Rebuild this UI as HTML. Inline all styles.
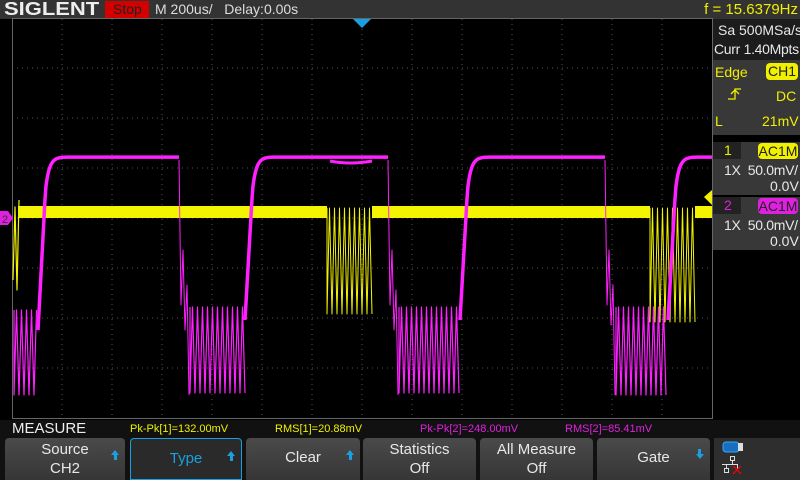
<!DOCTYPE html>
<html><head><meta charset="utf-8"><style>
*{margin:0;padding:0;box-sizing:border-box}
body{width:800px;height:480px;background:#000;position:relative;overflow:hidden;font-family:"Liberation Sans",sans-serif;color:#fff}
.abs{position:absolute;white-space:nowrap}
.top{left:0;top:0;width:800px;height:19px;background:#333}
.btn{position:absolute;top:438px;height:42px;background:linear-gradient(#4a4a4a,#363636);border-radius:4px 4px 0 0;color:#e8e8e8;font-size:15px;text-align:center;line-height:19px}
.arr{position:absolute;right:6px;top:12px;width:0;height:0;border-left:4px solid transparent;border-right:4px solid transparent;border-bottom:5px solid #1aa0e0}
.arr:after{content:"";position:absolute;left:-1.5px;top:5px;width:3px;height:5px;background:#1aa0e0}
.rp{color:#e8e8e8;font-size:14px;line-height:17px}
.y{color:#f0f000}
</style></head><body>
<div class="abs top"></div>
<div class="abs" style="left:4px;top:0;font-size:18px;font-weight:bold;color:#eee;line-height:19px;transform:scaleX(1.22);transform-origin:left">SIGLENT</div>
<div class="abs" style="left:105px;top:1px;width:44px;height:17px;background:#d40000;color:#222;font-size:14px;line-height:17px;padding-left:8px">Stop</div>
<div class="abs" style="left:155px;top:0;font-size:14px;line-height:19px;color:#ddd">M 200us/&nbsp;&nbsp; Delay:0.00s</div>
<div class="abs y" style="right:2px;top:0;font-size:15px;line-height:19px">f = 15.6379Hz</div>
<svg class="abs" style="left:0;top:0" width="800" height="480">
<g stroke="#555" stroke-width="1" stroke-dasharray="1,4" id="grid"></g>
<rect x="12.5" y="18.5" width="700" height="400" fill="none" stroke="#666"/>
<polygon points="353,19 371,19 362,28" fill="#1aa0e0"/>
<g id="wave" fill="none" stroke-linejoin="round"></g>
<polygon points="0,211 8,211 13,218 8,225 0,225" fill="#e020e0"/>
<text x="2" y="223" font-size="11" fill="#333" font-family="Liberation Sans">2</text>
<polygon points="712,190 712,205 704,197" fill="#f0f000"/>
</svg>
<div class="abs" style="left:713px;top:19px;width:87px;height:41px;background:#1c1c1c"></div>
<div class="abs rp" style="left:718px;top:22px">Sa 500MSa/s</div>
<div class="abs rp" style="left:714px;top:41px;letter-spacing:-0.3px">Curr 1.40Mpts</div>
<div class="abs" style="left:713px;top:60px;width:87px;height:75px;background:#383838"></div>
<div class="abs rp y" style="left:715px;top:64px">Edge</div>
<div class="abs" style="left:766px;top:63px;width:32px;height:17px;background:#f0f000;border-radius:4px;color:#222;font-size:14px;text-align:center;line-height:17px">CH1</div>
<svg class="abs" style="left:726px;top:86px" width="16" height="16"><path d="M2 13H9V3H15M5 8L9 4L13 8" stroke="#f0f000" fill="none" stroke-width="1.3"/></svg>
<div class="abs rp y" style="left:776px;top:88px">DC</div>
<div class="abs rp y" style="left:715px;top:113px">L</div>
<div class="abs rp y" style="left:762px;top:113px">21mV</div>
<div class="abs" style="left:713px;top:142px;width:87px;height:53px;background:#383838"></div>
<div class="abs" style="left:713px;top:142px;width:28px;height:17px;background:#222"></div>
<div class="abs rp y" style="left:724px;top:142px">1</div>
<div class="abs" style="left:758px;top:143px;width:40px;height:16px;background:#f0f000;border-radius:4px;color:#222;font-size:14px;text-align:center;line-height:16px">AC1M</div>
<div class="abs rp" style="left:724px;top:162px;letter-spacing:-0.3px">1X&nbsp; 50.0mV/</div>
<div class="abs rp" style="left:770px;top:178px">0.0V</div>
<div class="abs" style="left:713px;top:197px;width:87px;height:53px;background:#383838"></div>
<div class="abs" style="left:713px;top:197px;width:28px;height:17px;background:#222"></div>
<div class="abs rp" style="left:724px;top:197px;color:#e020e0">2</div>
<div class="abs" style="left:758px;top:198px;width:40px;height:16px;background:#e020e0;border-radius:4px;color:#222;font-size:14px;text-align:center;line-height:16px">AC1M</div>
<div class="abs rp" style="left:724px;top:217px;letter-spacing:-0.3px">1X&nbsp; 50.0mV/</div>
<div class="abs rp" style="left:770px;top:233px">0.0V</div>
<div class="abs" style="left:0;top:420px;width:800px;height:60px;background:#111"></div>
<div class="abs" style="left:12px;top:420px;font-size:15px;color:#eee">MEASURE</div>
<div class="abs" style="left:130px;top:423px;font-size:11px;color:#f0f000">Pk-Pk[1]=132.00mV</div>
<div class="abs" style="left:275px;top:423px;font-size:11px;color:#f0f000">RMS[1]=20.88mV</div>
<div class="abs" style="left:420px;top:423px;font-size:11px;color:#e020e0">Pk-Pk[2]=248.00mV</div>
<div class="abs" style="left:565px;top:423px;font-size:11px;color:#e020e0">RMS[2]=85.41mV</div>
<div class="btn" style="left:5px;width:120px;padding-top:2px">Source<br>CH2<span class="arr"></span></div>
<div class="btn" style="left:130px;width:112px;border:1px solid #1aa0e0;color:#1aa0e0;line-height:40px;background:#2a2a2a">Type<span class="arr"></span></div>
<div class="btn" style="left:246px;width:114px;line-height:40px">Clear<span class="arr"></span></div>
<div class="btn" style="left:363px;width:113px;padding-top:2px">Statistics<br>Off</div>
<div class="btn" style="left:480px;width:113px;padding-top:2px">All Measure<br>Off</div>
<div class="btn" style="left:597px;width:113px;line-height:40px">Gate<span class="arr" style="transform:rotate(180deg);top:16px"></span></div>
<div class="abs" style="left:714px;top:438px;width:86px;height:42px;background:#2e2e2e"></div>
<svg class="abs" style="left:714px;top:438px" width="40" height="42">
<rect x="9" y="4" width="16" height="10" rx="3" fill="#1a6ec0" stroke="#3af" stroke-width="1"/>
<rect x="24" y="5" width="5" height="8" fill="#ddd"/>
<g fill="none" stroke="#ddd" stroke-width="1"><rect x="16.5" y="18.5" width="4" height="4"/><path d="M18.5 22.5v4M8 26.5h16M12.5 26.5v4M23.5 26.5v4"/><rect x="10.5" y="30.5" width="4" height="4"/></g>
<path d="M19 28l8 8M27 28l-8 8" stroke="#e00" stroke-width="1.3"/>
</svg>
<script>
var ns="http://www.w3.org/2000/svg",g=document.getElementById('grid'),d='';
for(var x=62;x<712;x+=50)d+='M'+x+' 19V418';
for(var y=68;y<418;y+=50)d+='M12 '+y+'H712';
var p=document.createElementNS(ns,'path');p.setAttribute('d',d);g.appendChild(p);
var w=document.getElementById('wave');
function add(d,c,sw,op){var p=document.createElementNS(ns,'path');p.setAttribute('d',d);p.setAttribute('stroke',c);p.setAttribute('stroke-width',sw);if(op)p.setAttribute('opacity',op);w.appendChild(p);}
var Y='#f4f400';
[[18,327],[372,650],[695,712]].forEach(function(s){add('M'+s[0]+' 212H'+s[1],Y,12);});
function zig(x0,x1,top,bot,per){var s='M'+x0+' '+top,t=1;for(var x=x0;x<=x1;x+=per/2){s+='L'+x.toFixed(1)+' '+(t?bot:top);t=!t;}return s;}
add(zig(327,372,208,314,5),Y,1);
add(zig(650,695,208,322,5),Y,1);
add('M13 280L15 207L17 290L19 200',Y,1.2);
var M='#ff20ff';
function rise(x0,yb,x1){var s='M'+x0+' '+yb;for(var i=0;i<=30;i++){var t=i/30,x=x0+(x1-x0)*t,y;if(t<0.25)y=yb-(yb-190)*(t/0.25);else y=157+33*Math.exp(-(t-0.25)*8);s+='L'+x.toFixed(1)+' '+y.toFixed(1);}return s;}
add(rise(38,330,68)+'H179',M,3.5);
add(rise(245,320,275)+'H388',M,3.5);
add(rise(460,320,490)+'H605',M,3.5);
add(rise(668,320,698)+'H712',M,3.5);
add('M179 160L181 305L183 250L185 330L187 285L189 395',M,1);
add('M388 160L390 305L392 250L394 330L396 290L398 395',M,1);
add('M605 160L607 305L609 250L611 325L613 285L615 395',M,1);
add(zig(14,38,310,395,5),M,1.2);
add(zig(190,245,307,393,5),M,1.2);
add(zig(399,460,307,393,5),M,1.2);
add(zig(616,668,307,395,5),M,1.2);
add('M330 161Q350 165 372 161',M,3);
</script>
</body></html>
